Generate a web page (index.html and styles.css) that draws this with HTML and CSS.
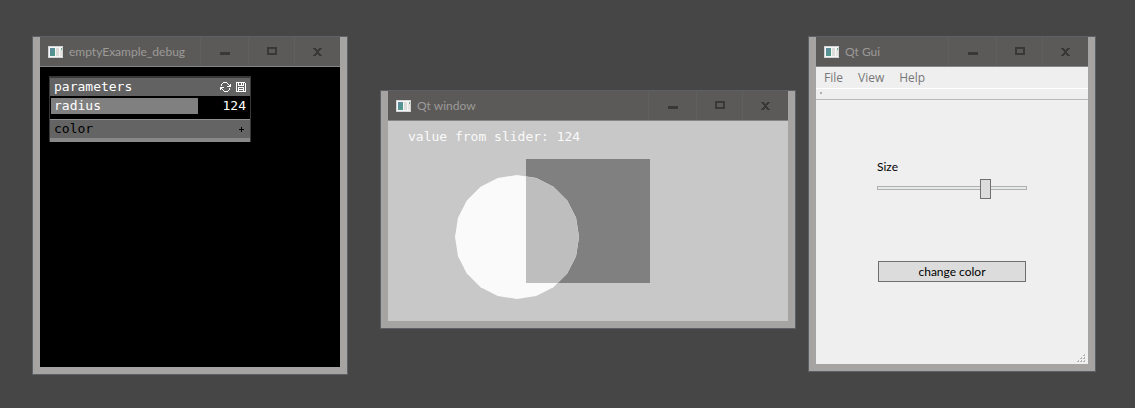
FILE: index.html
```html
<!DOCTYPE html>
<html lang="en">
<head>
<meta charset="utf-8">
<meta name="viewport" content="width=device-width, initial-scale=1">
<title>Qt and parameter windows</title>
<link rel="stylesheet" href="styles.css">
</head>
<body>
<svg class="defs" aria-hidden="true">
  <defs>
    <linearGradient id="app-fill" x1="0" y1="0" x2="1" y2="1">
      <stop offset="0" stop-color="#5f87a3"/>
      <stop offset="1" stop-color="#4c9d83"/>
    </linearGradient>
    <symbol id="i-app" viewBox="0 0 15 12">
      <path fill="#d2d4d6" d="M0 0h15v12H0z"/>
      <path fill="#f6f6f6" d="M1 1h13v10H1z"/>
      <path fill="url(#app-fill)" d="M2 2h5v8H2z"/>
      <path fill="#dcdcdb" d="M8 2h3v8H8z"/>
      <path fill="#e6e5e2" d="M12 4h2v6h-2z"/>
      <path fill="#6fa592" d="M13 2h1v2h-1z"/>
    </symbol>
    <symbol id="i-min" viewBox="0 0 10 9"><path d="M0 5h10v3H0z"/></symbol>
    <symbol id="i-max" viewBox="0 0 10 9"><path fill-rule="evenodd" d="M0 0h10v8H0zM2 2v4h6V2z"/></symbol>
    <symbol id="i-close" viewBox="0 0 9 8"><path d="M0 0h3v1h1v1h1V1h1V0h3v1H8v1H7v1H6v2h1v1h1v1h1v1H6V7H5V6H4v1H3v1H0V7h1V6h1V5h1V3H2V2H1V1H0z"/></symbol>
    <clipPath id="overlap"><path d="M138 38h124v124H138z"/></clipPath>
  </defs>
</svg>
<main class="desktop">
  <section class="window window-debug" aria-label="emptyExample_debug">
    <header class="titlebar">
      <svg class="app-icon"><use href="#i-app"/></svg>
      <h2 class="title">emptyExample_debug</h2>
      <button class="win-btn win-min" aria-label="Minimize"><svg class="glyph"><use href="#i-min"/></svg></button>
      <button class="win-btn" aria-label="Maximize"><svg class="glyph"><use href="#i-max"/></svg></button>
      <button class="win-btn" aria-label="Close"><svg class="glyph-close"><use href="#i-close"/></svg></button>
    </header>
    <div class="content debug">
      <div class="panel">
        <div class="panel-head">
          <span class="panel-name">parameters</span>
          <button class="panel-btn" aria-label="Reload">
            <svg width="11" height="10" viewBox="0 0 11 10"><path fill="#fff" d="M3 0h4v1H3zM7 1h1v1H7zM2 1h1v1H2zM1 2h1v2H1zM8 2h1v1H8zM10 2h1v3h-1zM7 4h4v1H7zM9 3h1v1H9zM0 5h4v1H0zM0 6h2v1H0zM0 7h1v1H0zM2 7h1v1H2zM3 8h1v1H3zM4 9h4v1H4zM8 8h1v1H8zM9 6h1v2H9z"/></svg>
          </button>
          <button class="panel-btn" aria-label="Save">
            <svg width="10" height="10" viewBox="0 0 10 10"><path fill="#fff" fill-rule="evenodd" d="M0 0h9v1h1v9H0zM1 1v8h1V5h6v4h1V1H8v3H2V1zM3 1v2h2V1zM6 1v2h1V1zM3 6v3h4V6z"/><path fill="#fff" d="M3 7h4v1H3z"/></svg>
          </button>
        </div>
        <div class="param">
          <div class="param-fill">radius</div>
          <output class="param-value">124</output>
        </div>
        <button class="group"><span>color</span><svg width="5" height="5" viewBox="0 0 5 5" aria-label="Expand"><path d="M2 0h1v2h2v1H3v2H2V3H0V2h2z"/></svg></button>
      </div>
    </div>
  </section>

  <section class="window window-canvas" aria-label="Qt window">
    <header class="titlebar">
      <svg class="app-icon"><use href="#i-app"/></svg>
      <h2 class="title">Qt window</h2>
      <button class="win-btn win-min" aria-label="Minimize"><svg class="glyph"><use href="#i-min"/></svg></button>
      <button class="win-btn" aria-label="Maximize"><svg class="glyph"><use href="#i-max"/></svg></button>
      <button class="win-btn" aria-label="Close"><svg class="glyph-close"><use href="#i-close"/></svg></button>
    </header>
    <div class="content canvas">
      <svg class="drawing" viewBox="0 0 400 200" aria-hidden="true">
        <path fill="#808080" d="M138 38h124v124H138z"/>
        <polygon fill="#fafafa" points="191,116 188,135.2 179.2,152.4 165.4,166.2 148.2,175 129,178 109.8,175 92.6,166.2 78.8,152.4 70,135.2 67,116 70,96.8 78.8,79.6 92.6,65.8 109.8,57 129,54 148.2,57 165.4,65.8 179.2,79.6 188,96.8"/>
        <polygon fill="#bebebe" clip-path="url(#overlap)" points="191,116 188,135.2 179.2,152.4 165.4,166.2 148.2,175 129,178 109.8,175 92.6,166.2 78.8,152.4 70,135.2 67,116 70,96.8 78.8,79.6 92.6,65.8 109.8,57 129,54 148.2,57 165.4,65.8 179.2,79.6 188,96.8"/>
      </svg>
      <p class="caption">value from slider: 124</p>
    </div>
  </section>

  <section class="window window-gui" aria-label="Qt Gui">
    <header class="titlebar">
      <svg class="app-icon"><use href="#i-app"/></svg>
      <h2 class="title">Qt Gui</h2>
      <button class="win-btn win-min" aria-label="Minimize"><svg class="glyph"><use href="#i-min"/></svg></button>
      <button class="win-btn" aria-label="Maximize"><svg class="glyph"><use href="#i-max"/></svg></button>
      <button class="win-btn" aria-label="Close"><svg class="glyph-close"><use href="#i-close"/></svg></button>
    </header>
    <div class="content gui">
      <nav class="menubar">
        <button class="menu">File</button>
        <button class="menu">View</button>
        <button class="menu">Help</button>
      </nav>
      <div class="toolbar"><span class="grip"></span></div>
      <form class="form">
        <label class="label" for="size">Size</label>
        <input class="slider" id="size" type="range" min="50" max="149" value="124">
        <button class="push" type="button">change color</button>
      </form>
      <svg class="size-grip" width="8" height="8" viewBox="0 0 8 8" aria-hidden="true"><path fill="#b4b4b4" d="M6 0h2v2H6zM3 3h2v2H3zM6 3h2v2H6zM0 6h2v2H0zM3 6h2v2H3zM6 6h2v2H6z"/><path fill="#fff" d="M6 0h1v1H6zM3 3h1v1H3zM6 3h1v1H6zM0 6h1v1H0zM3 6h1v1H3zM6 6h1v1H6z"/></svg>
    </div>
  </section>
</main>
</body>
</html>
```
FILE: styles.css
```css
* { box-sizing: border-box; }

body {
  margin: 0;
  background: #464646;
  font: 12px/16px "Open Sans", "Noto Sans", sans-serif;
}

button {
  margin: 0;
  padding: 0;
  border: 0;
  background: none;
  color: inherit;
  font: inherit;
}

.defs { position: absolute; width: 0; height: 0; }

.desktop {
  position: relative;
  min-height: 100vh;
  overflow: hidden;
}

/* Windows placed freely on the desktop */
.window {
  position: absolute;
  display: flex;
  flex-direction: column;
  border: 1px solid #5e6067;
  background: #a5a4a2;
  padding: 0 7px 7px;
}
.window-debug { left: 32px; top: 36px; width: 316px; }
.window-canvas { left: 380px; top: 90px; width: 416px; }
.window-gui { left: 808px; top: 36px; width: 288px; }

.titlebar {
  display: flex;
  align-items: center;
  height: 30px;
  padding-left: 8px;
  background: #5b5a58;
  border-bottom: 1px solid #85868a;
}
.app-icon { width: 15px; height: 12px; }
.title {
  flex: 1;
  margin: 0;
  padding-left: 6px;
  color: #9d9b98;
  font: 400 12px/16px Lato, sans-serif;
}
.win-btn {
  display: flex;
  align-items: center;
  justify-content: center;
  align-self: stretch;
  width: 46px;
  border-left: 1px solid #5f5f60;
  color: #393836;
}
.win-min { width: 48px; }
.glyph { width: 10px; height: 9px; fill: currentColor; }
.glyph-close { width: 9px; height: 8px; fill: currentColor; }

/* Parameter panel */
.debug {
  min-height: 300px;
  padding: 9px 89px 0 9px;
  background: #000;
}
.debug, .canvas { font: 13px/18px "DejaVu Sans Mono", monospace; }
.panel {
  border: solid #383838;
  border-width: 2px 1px 0;
  color: #fff;
}
.panel-head {
  display: flex;
  align-items: center;
  gap: 5px;
  height: 18px;
  padding: 0 4px;
  background: #626262;
}
.panel-name { flex: 1; }
.panel-btn { display: flex; }
.param {
  display: flex;
  align-items: center;
  justify-content: space-between;
  height: 23px;
  padding: 0 4px 3px 1px;
}
.param-fill {
  width: 147px;
  height: 16px;
  padding-left: 3px;
  background: #808080;
  line-height: 16px;
}
.group {
  display: flex;
  align-items: center;
  justify-content: space-between;
  width: 100%;
  height: 23px;
  padding: 0 6px 0 4px;
  border-top: 1px solid #909090;
  border-bottom: 4px solid #888;
  background: #646464;
  color: #000;
}

/* Drawing window */
.canvas { position: relative; background: #c8c8c8; }
.drawing { display: block; width: 100%; }
.caption {
  position: absolute;
  left: 20px;
  top: 7px;
  margin: 0;
  color: #fafafa;
}

/* Controls window */
.gui {
  display: flex;
  flex-direction: column;
  min-height: 297px;
  background: #efefef;
}
.menubar {
  display: flex;
  gap: 15px;
  height: 22px;
  padding: 0 8px;
  border-bottom: 1px solid #fff;
  color: #777;
}
.toolbar {
  height: 11px;
  padding: 3px 4px;
  border-bottom: 1px solid #b8b8b8;
}
.grip { display: block; width: 2px; height: 2px; background: #b0b0b0; }
.form {
  display: flex;
  flex: 1;
  flex-direction: column;
  padding: 59px 61px 0;
  color: #000;
  font: 12px/16px Lato, sans-serif;
}
.slider {
  appearance: none;
  width: 100%;
  height: 20px;
  margin: 3px 0 63px;
  background: none;
}
.slider::-webkit-slider-runnable-track {
  height: 4px;
  border: 1px solid #b0b0b0;
  background: #e7eaea;
}
.slider::-webkit-slider-thumb {
  appearance: none;
  width: 11px;
  height: 20px;
  margin-top: -8px;
  border: 1px solid #707070;
  background: #dcdcdc;
}
.push {
  height: 21px;
  margin: 0 1px;
  border: 1px solid #707070;
  background: #dcdcdc;
}
.size-grip { align-self: flex-end; margin: 0 3px 2px 0; }
```
